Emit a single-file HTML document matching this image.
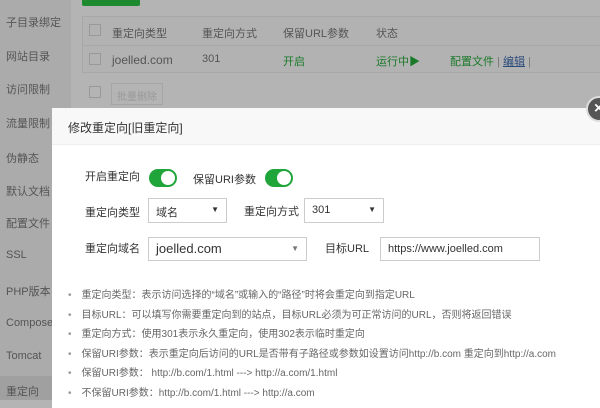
<!DOCTYPE html>
<html><head><meta charset="utf-8"><style>
*{margin:0;padding:0;box-sizing:border-box}
body{width:600px;height:400px;overflow:hidden;position:relative;background:#b4b4b4;font-family:"Liberation Sans","Noto Sans CJK SC",sans-serif;font-size:11px;color:#444}
.side{position:absolute;left:0;top:0;width:71px;height:400px;background:#ababab}
.side div{position:absolute;left:6px;color:#555;font-size:11px}
.t{position:absolute;color:#555;white-space:nowrap}
.dlg{position:absolute;left:52px;top:108px;width:560px;height:300px;background:#fff}
.hd{height:37px;background:#f8f8f8;border-bottom:1px solid #eee;padding:11px 0 0 16px;font-size:12px;color:#333}
.lb{position:absolute;font-size:11px;color:#333;white-space:nowrap}
.tg{position:absolute;width:28px;height:18px;border-radius:9px;background:#20a53a}
.tg:after{content:"";position:absolute;right:2px;top:2px;width:14px;height:14px;border-radius:50%;background:#fff}
.sel{position:absolute;border:1px solid #ccc;height:25px;padding:5px 7px;font-size:11px;color:#333;background:#fff;white-space:nowrap}
.sel b{position:absolute;right:7px;top:6px;font-size:8px}
ul{position:absolute;left:16px;top:178px;list-style:none}
li{font-size:10px;color:#666;height:19.5px;line-height:19.5px;white-space:nowrap}
li:before{content:"•";color:#999;margin-right:10px}
</style></head><body>
<div class="side">
<div style="top:14px">子目录绑定</div><div style="top:48px">网站目录</div><div style="top:81px">访问限制</div><div style="top:115px">流量限制</div><div style="top:150px">伪静态</div><div style="top:183px">默认文档</div><div style="top:215px">配置文件</div><div style="top:249px">SSL</div><div style="top:283px">PHP版本</div><div style="top:317px">Compose</div><div style="top:350px">Tomcat</div>
<div style="top:376px;left:0;width:71px;height:24px;background:#a0a0a0;padding:7px 6px">重定向</div>
</div>
<div style="position:absolute;left:82px;top:-4px;width:58px;height:10px;background:#1e8a30;border-radius:2px"></div>
<div style="position:absolute;left:82px;top:16px;width:530px;height:57px;border:1px solid #a8a8a8;background:#b2b2b2"></div>
<div style="position:absolute;left:82px;top:45px;width:530px;height:1px;background:#a8a8a8"></div>
<div style="position:absolute;left:89px;top:24px;width:12px;height:12px;border:1px solid #999"></div>
<div style="position:absolute;left:89px;top:53px;width:12px;height:12px;border:1px solid #999"></div>
<div style="position:absolute;left:89px;top:86px;width:12px;height:12px;border:1px solid #999"></div>
<div style="position:absolute;left:111px;top:83px;width:52px;height:22px;border:1px solid #a5a5a5;color:#999;padding:4px 5px;font-size:10px;white-space:nowrap">批量删除</div>
<div class="t" style="left:112px;top:25px">重定向类型</div><div class="t" style="left:202px;top:25px">重定向方式</div><div class="t" style="left:283px;top:25px">保留URL参数</div><div class="t" style="left:376px;top:25px">状态</div>
<div class="t" style="left:112px;top:53px;font-size:12px">joelled.com</div><div class="t" style="left:202px;top:53px">301</div><div class="t" style="left:283px;top:53px;color:#1b7a2a">开启</div><div class="t" style="left:376px;top:53px;color:#1b7a2a">运行中▶</div><div class="t" style="left:450px;top:53px;color:#1b7a2a">配置文件 <span style="color:#777">|</span> <u style="color:#2a4a7a">编辑</u> <span style="color:#777">|</span></div>
<div class="dlg">
<div class="hd">修改重定向[旧重定向]</div>
<div class="lb" style="left:33px;top:60px">开启重定向</div><div class="tg" style="left:97px;top:61px"></div>
<div class="lb" style="left:141px;top:63px">保留URI参数</div><div class="tg" style="left:213px;top:61px"></div>
<div class="lb" style="left:33px;top:96px">重定向类型</div><div class="sel" style="left:96px;top:90px;width:79px">域名<b>▼</b></div>
<div class="lb" style="left:192px;top:95px">重定向方式</div><div class="sel" style="left:252px;top:90px;width:80px">301<b>▼</b></div>
<div class="lb" style="left:33px;top:132px">重定向域名</div><div class="sel" style="left:96px;top:129px;width:159px;height:24px;font-size:13px;padding-top:3px">joelled.com<b style="top:6px;color:#777">▼</b></div>
<div class="lb" style="left:273px;top:132px">目标URL</div><div class="sel" style="left:328px;top:129px;width:160px;height:24px">https://www.joelled.com</div>
<ul>
<li>重定向类型：表示访问选择的“域名”或输入的“路径”时将会重定向到指定URL</li>
<li>目标URL：可以填写你需要重定向到的站点，目标URL必须为可正常访问的URL，否则将返回错误</li>
<li>重定向方式：使用301表示永久重定向，使用302表示临时重定向</li>
<li>保留URI参数：表示重定向后访问的URL是否带有子路径或参数如设置访问http://b.com 重定向到http://a.com</li>
<li>保留URI参数： http://b.com/1.html ---&gt; http://a.com/1.html</li>
<li>不保留URI参数：http://b.com/1.html ---&gt; http://a.com</li>
</ul>
</div>
<div style="position:absolute;left:586px;top:96px;width:26px;height:26px;border-radius:50%;background:#555;border:2px solid #ddd;color:#fff;font-size:16px;line-height:21px;padding-left:6px;font-weight:bold">×</div>
</body></html>
